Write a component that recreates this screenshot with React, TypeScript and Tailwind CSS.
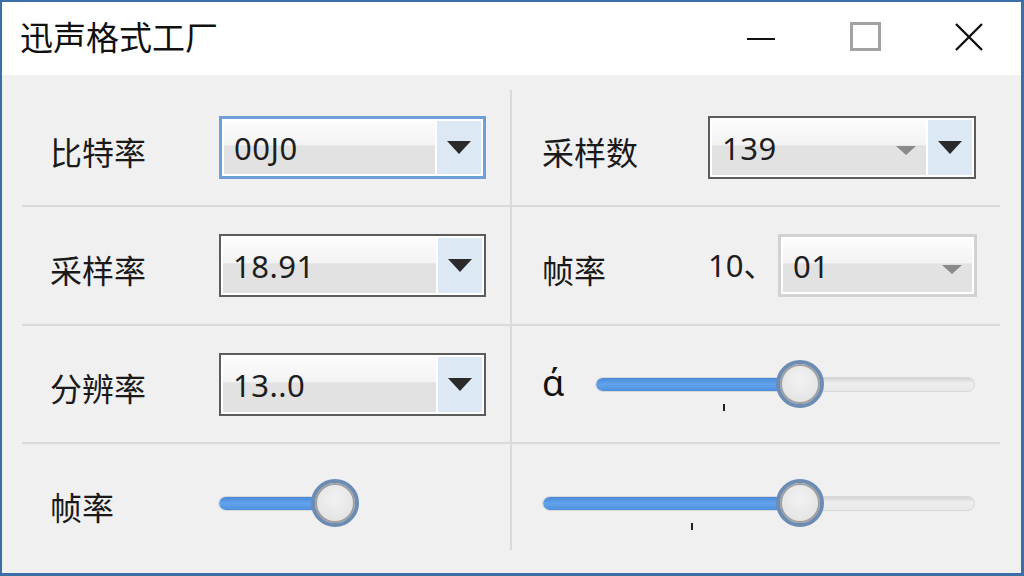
import React from 'react'

const cjk = { fontFamily: '"Noto Sans CJK SC", "Noto Sans", sans-serif' }
const num = { fontFamily: '"Noto Sans", "Noto Sans CJK SC", sans-serif' }

type ComboProps = {
  value: string
  tone: 'focus' | 'dark' | 'light'
  button?: boolean
  smallArrow?: boolean
  width: string
}

function Combo({ value, tone, button = true, smallArrow = false, width }: ComboProps) {
  const outer =
    tone === 'focus'
      ? 'border-[3px] border-[#6e9fd8]'
      : tone === 'dark'
        ? 'border-2 border-[#5c5c5c]'
        : 'border-[3px] border-[#d2d2d2]'

  return (
    <div className={`${width} h-[63px] ${outer} bg-white p-[2px] flex`}>
      <div className="flex-1 relative flex items-center pl-[10px] bg-[linear-gradient(to_bottom,#fcfcfc_0%,#f3f3f3_45%,#e2e2e2_47%,#e2e2e2_100%)]">
        <span className="text-[31px] leading-none text-[#1e1e1e] tracking-[0.5px] mt-[2px]" style={num}>
          {value}
        </span>
        {smallArrow && (
          <div className="absolute right-[10px] top-[26px] w-0 h-0 border-l-[10px] border-r-[10px] border-t-[9px] border-l-transparent border-r-transparent border-t-[#8a8a8a]" />
        )}
      </div>
      {button && (
        <div className="w-[44px] bg-[#dde8f5] flex items-center justify-center ml-[2px]">
          <div className="w-0 h-0 border-l-[12px] border-r-[12px] border-t-[13px] border-l-transparent border-r-transparent border-t-[#2a2a2a]" />
        </div>
      )}
    </div>
  )
}

type SliderProps = {
  width: string
  thumb: number // px from left, center
  total: number
  tick?: number
}

function Slider({ width, thumb, total, tick }: SliderProps) {
  return (
    <div className={`relative ${width} h-[50px] flex items-center`}>
      <div className="w-full h-[15px] rounded-full bg-[linear-gradient(to_bottom,#d4d4d4,#eeeeee_40%,#e8e8e8)] border border-[#d8d8d8] overflow-hidden">
        <div
          className="h-full rounded-full bg-[linear-gradient(to_bottom,#4b8ad6,#62a3ee_50%,#4f90dc)]"
          style={{ width: `${(thumb / total) * 100}%` }}
        />
      </div>
      <div
        className="absolute top-[1px] w-[48px] h-[48px] rounded-full border-[4px] border-[#6c8cb3] bg-[radial-gradient(circle_at_50%_40%,#f2f2f2,#dedede)] shadow-[inset_0_0_0_2px_#a0a0a0]"
        style={{ left: thumb - 24 }}
      />
      {tick !== undefined && (
        <div className="absolute top-[45px] w-[2px] h-[7px] bg-[#222]" style={{ left: tick }} />
      )}
    </div>
  )
}

function Label({ children, w }: { children: React.ReactNode; w: string }) {
  return (
    <div className={`${w} text-[32px] leading-none text-[#1a1a1a] mt-[6px]`} style={cjk}>
      {children}
    </div>
  )
}

export default function App() {
  return (
    <div className="w-[1024px] h-[576px] flex flex-col border-l-2 border-t-2 border-r-[3px] border-b-[3px] border-[#3c6ea8] bg-[#f0f0f0] overflow-hidden">
      {/* Title bar */}
      <div className="h-[73px] bg-white flex items-center shrink-0">
        <div className="pl-[18px] text-[33px] leading-none text-[#111] -mt-[4px]" style={cjk}>
          迅声格式工厂
        </div>
        <div className="ml-auto flex items-center h-full -mt-[4px]">
          <div className="w-[104px] flex justify-center">
            <div className="w-[28px] h-[2px] bg-[#111] mt-[4px]" />
          </div>
          <div className="w-[104px] flex justify-center">
            <div className="w-[31px] h-[29px] border-[3px] border-[#a2a2a2]" />
          </div>
          <div className="w-[104px] flex justify-center">
            <svg width="30" height="30" viewBox="0 0 30 30">
              <path d="M2 2 L28 28 M28 2 L2 28" stroke="#111" strokeWidth="2.4" fill="none" />
            </svg>
          </div>
        </div>
      </div>

      {/* Settings grid */}
      <div className="flex-1 pt-[15px] px-[20px]">
        <div className="grid grid-cols-[490px_488px] grid-rows-[117px_119px_118px_106px]">
          {/* Row 1 */}
          <div className="border-r-2 border-b-2 border-[#dadada] flex items-center pl-[28px]">
            <Label w="w-[169px]">比特率</Label>
            <Combo value="00J0" tone="focus" width="w-[267px]" />
          </div>
          <div className="border-b-2 border-[#dadada] flex items-center pl-[30px]">
            <Label w="w-[166px]">采样数</Label>
            <Combo value="139" tone="dark" smallArrow width="w-[268px]" />
          </div>

          {/* Row 2 */}
          <div className="border-r-2 border-b-2 border-[#dadada] flex items-center pl-[28px]">
            <Label w="w-[169px]">采样率</Label>
            <Combo value="18.91" tone="dark" width="w-[267px]" />
          </div>
          <div className="border-b-2 border-[#dadada] flex items-center pl-[30px]">
            <Label w="w-[166px]">帧率</Label>
            <div className="w-[70px] text-[31px] leading-none text-[#1e1e1e]" style={num}>
              10、
            </div>
            <Combo value="01" tone="light" button={false} smallArrow width="w-[199px]" />
          </div>

          {/* Row 3 */}
          <div className="border-r-2 border-b-2 border-[#dadada] flex items-center pl-[28px]">
            <Label w="w-[169px]">分辨率</Label>
            <Combo value="13..0" tone="dark" width="w-[267px]" />
          </div>
          <div className="border-b-2 border-[#dadada] flex items-center pl-[30px]">
            <div className="w-[53px] text-[36px] leading-none text-[#111] -mt-[2px]" style={num}>
              ά
            </div>
            <Slider width="w-[380px]" thumb={205} total={380} tick={128} />
          </div>

          {/* Row 4 */}
          <div className="border-r-2 border-[#dadada] flex items-center pl-[28px] pt-[12px]">
            <Label w="w-[168px]">帧率</Label>
            <Slider width="w-[141px]" thumb={117} total={141} />
          </div>
          <div className="flex items-center pl-[30px] pt-[12px]">
            <Slider width="w-[433px]" thumb={258} total={433} tick={149} />
          </div>
        </div>
      </div>
    </div>
  )
}
